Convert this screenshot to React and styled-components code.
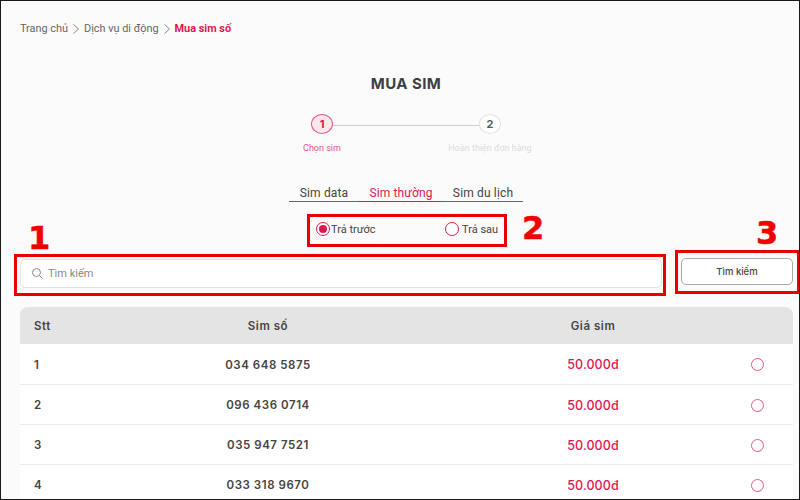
import React from "react";
import styled, { createGlobalStyle } from "styled-components";

const Global = createGlobalStyle`
  html, body { margin: 0; padding: 0; background: #fbfbfb; }
  * { box-sizing: border-box; }
`;

const Page = styled.div`
  position: relative;
  width: 800px;
  height: 500px;
  overflow: hidden;
  background: #fbfbfb;
  font-family: Roboto, "Liberation Sans", sans-serif;
  color: #444;
`;

const Frame = styled.div`
  position: absolute;
  inset: 0;
  border: 1px solid #1a1a1a;
  pointer-events: none;
  z-index: 5;
`;

const Breadcrumb = styled.nav`
  display: flex;
  align-items: center;
  height: 16px;
  margin: 20px 0 0 20px;
  font-size: 10.9px;
  color: #666;
`;

const Sep = styled.svg`
  width: 6px;
  height: 10px;
  margin: 2px 5px 0 5px;
  fill: none;
  stroke: #888;
  stroke-width: 1;
`;

const Current = styled.span`
  font-weight: 700;
  color: #e0164f;
`;

const Title = styled.h1`
  margin: 39px 0 0 12px;
  height: 18px;
  text-align: center;
  font: 700 15px/18px Inter, sans-serif;
  letter-spacing: 0.45px;
  color: #3b3f44;
`;

const Stepper = styled.div`
  display: flex;
  justify-content: center;
  margin: 21px 0 0 12px;
  height: 40px;
`;

const Step = styled.div`
  display: flex;
  flex-direction: column;
  align-items: center;
  width: 100px;
  position: relative;
  z-index: 1;
`;

const StepDot = styled.div`
  width: 22px;
  height: 22px;
  border-radius: 50%;
  display: flex;
  align-items: center;
  justify-content: center;
  font: 700 11px/1 Inter, sans-serif;
  border: 1px solid ${(p) => (p.$active ? "#e8577f" : "#e2e2e2")};
  background: ${(p) => (p.$active ? "#fde6ec" : "#fff")};
  color: ${(p) => (p.$active ? "#d81648" : "#5a5a62")};
`;

const StepLabel = styled.div`
  margin-top: 8px;
  font-size: 9px;
  line-height: 12px;
  white-space: nowrap;
  color: ${(p) => (p.$active ? "#e8557d" : "#dcdcdc")};
`;

const StepLine = styled.div`
  width: 146px;
  height: 1px;
  margin: 11px -39px 0;
  background: #cfcfcf;
`;

const Tabs = styled.div`
  display: flex;
  align-items: flex-start;
  width: 234px;
  height: 19px;
  margin: 29px 0 0 289px;
  border-bottom: 1px solid #666;
`;

const Tab = styled.div`
  width: ${(p) => p.$w}px;
  height: 19px;
  padding-top: 2px;
  text-align: center;
  font-size: 12px;
  line-height: 16px;
  letter-spacing: 0.15px;
  white-space: nowrap;
  color: ${(p) => (p.$active ? "#e0164f" : "#444")};
  border-bottom: 1px solid ${(p) => (p.$active ? "#e0164f" : "transparent")};
`;

const RadioRow = styled.div`
  display: flex;
  height: 18px;
  margin: 18px 0 0 316px;
`;

const RadioOption = styled.label`
  display: flex;
  align-items: center;
  gap: ${(p) => p.$gap}px;
  width: ${(p) => p.$w}px;
  font-size: 11px;
  color: #444;
`;

const Radio = styled.span`
  position: relative;
  display: block;
  flex: none;
  width: 14px;
  height: 14px;
  border-radius: 50%;
  background: #fff;
  border: 1px solid #e0164f;
  &::after {
    content: "";
    display: ${(p) => (p.$on ? "block" : "none")};
    position: absolute;
    inset: 2px;
    border-radius: 50%;
    background: #e0164f;
  }
`;

const SearchRow = styled.div`
  display: flex;
  align-items: flex-start;
  margin: 21px 0 0 20px;
`;

const SearchBox = styled.div`
  display: flex;
  align-items: center;
  gap: 5px;
  width: 642px;
  height: 29px;
  padding-left: 11px;
  background: #fff;
  border: 1px solid #e2e2e2;
  border-radius: 5px;
  font-size: 11px;
  color: #888;
`;

const SearchButton = styled.button`
  width: 112px;
  height: 27px;
  margin: -1px 0 0 19px;
  background: #fff;
  border: 1px solid #a9a9a9;
  border-radius: 5px;
  font: 500 9.5px Inter, sans-serif;
  color: #444;
`;

const Table = styled.div`
  width: 773px;
  margin: 19px 0 0 20px;
`;

const Row = styled.div`
  display: grid;
  grid-template-columns: 51px 394px 256px 72px;
  align-items: center;
  height: ${(p) => (p.$head ? 37 : 40)}px;
  padding-top: ${(p) => (p.$head ? 0 : 1)}px;
  background: ${(p) => (p.$head ? "#e4e4e4" : "#fff")};
  border-radius: ${(p) => (p.$head ? "8px 8px 0 0" : "0")};
  border-top: ${(p) => (p.$line ? "1px solid #ececec" : "0")};
  font: 600 11.5px Inter, sans-serif;
  letter-spacing: 0.55px;
  color: #444;
`;

const Cell = styled.div`
  padding-left: ${(p) => (p.$left ? "14px" : "0")};
  white-space: nowrap;
  display: flex;
  justify-content: ${(p) => (p.$left ? "flex-start" : "center")};
`;

const Price = styled(Cell)`
  color: #e0164f;
  font-size: 12.5px;
  font-weight: 500;
  letter-spacing: 0.1px;
`;

const RowRadio = styled.span`
  display: block;
  width: 13px;
  height: 13px;
  border: 1px solid #e8577f;
  border-radius: 50%;
`;

const Marker = styled.div`
  position: absolute;
  left: ${(p) => p.$x}px;
  top: ${(p) => p.$y}px;
  width: ${(p) => p.$w}px;
  height: ${(p) => p.$h}px;
  border: 3px solid #e60000;
  z-index: 3;
`;

const Num = styled.div`
  position: absolute;
  left: ${(p) => p.$x}px;
  top: ${(p) => p.$y}px;
  font: 700 32px/32px "DejaVu Sans", sans-serif;
  -webkit-text-stroke: 0.5px #f00000;
  color: #f00000;
  z-index: 3;
`;

const rows = [
  ["1", "034 648 5875"],
  ["2", "096 436 0714"],
  ["3", "035 947 7521"],
  ["4", "033 318 9670"],
];

const Chevron = () => (
  <Sep viewBox="0 0 6 10">
    <path d="M.5.5 5.5 5 .5 9.5" />
  </Sep>
);

export default function App() {
  return (
    <Page>
      <Global />
      <Breadcrumb>
        <span>Trang chủ</span>
        <Chevron />
        <span>Dịch vụ di động</span>
        <Chevron />
        <Current>Mua sim số</Current>
      </Breadcrumb>
      <Title>MUA SIM</Title>
      <Stepper>
        <Step>
          <StepDot $active>1</StepDot>
          <StepLabel $active>Chọn sim</StepLabel>
        </Step>
        <StepLine />
        <Step>
          <StepDot>2</StepDot>
          <StepLabel>Hoàn thiện đơn hàng</StepLabel>
        </Step>
      </Stepper>
      <Tabs>
        <Tab $w={70}>Sim data</Tab>
        <Tab $w={84} $active>Sim thường</Tab>
        <Tab $w={80}>Sim du lịch</Tab>
      </Tabs>
      <RadioRow>
        <RadioOption $w={129} $gap={1}>
          <Radio $on />
          Trả trước
        </RadioOption>
        <RadioOption $w={60} $gap={3}>
          <Radio />
          Trả sau
        </RadioOption>
      </RadioRow>
      <SearchRow>
        <SearchBox>
          <svg width="11" height="11" viewBox="0 0 11 11" fill="none" stroke="#888" strokeWidth="1">
            <circle cx="4.5" cy="4.5" r="4" />
            <path d="M7.5 7.5 10.5 10.5" />
          </svg>
          Tìm kiếm
        </SearchBox>
        <SearchButton>Tìm kiếm</SearchButton>
      </SearchRow>
      <Table>
        <Row $head>
          <Cell $left>Stt</Cell>
          <Cell>Sim số</Cell>
          <Cell>Giá sim</Cell>
          <Cell />
        </Row>
        {rows.map(([n, num], i) => (
          <Row key={n} $line={i > 0}>
            <Cell $left>{n}</Cell>
            <Cell>{num}</Cell>
            <Price>50.000đ</Price>
            <Cell>
              <RowRadio />
            </Cell>
          </Row>
        ))}
      </Table>
      <Marker $x={14} $y={254} $w={652} $h={42} />
      <Marker $x={307} $y={214} $w={200} $h={33} />
      <Marker $x={675} $y={250} $w={125} $h={44} />
      <Num $x={28} $y={222}>1</Num>
      <Num $x={522} $y={212}>2</Num>
      <Num $x={756} $y={217}>3</Num>
      <Frame />
    </Page>
  );
}
